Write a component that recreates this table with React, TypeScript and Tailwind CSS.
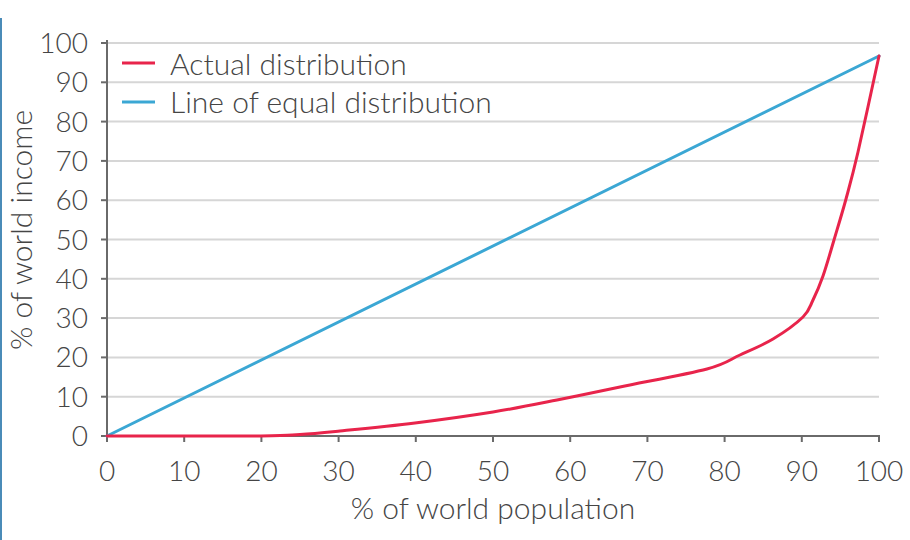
const X0 = 107;
const Y0 = 436;
const XS = 7.72; // px per % of population
const YS = 3.93; // px per % of income

const px = (v: number) => X0 + v * XS;
const py = (v: number) => Y0 - v * YS;

const ticks = [0, 10, 20, 30, 40, 50, 60, 70, 80, 90, 100];

// hand traced points of the actual distribution curve (page coords)
const actual: [number, number][] = [
  [107, 436],
  [261, 436],
  [300, 434.5],
  [340, 431],
  [415, 423],
  [493, 412],
  [557, 400],
  [620, 387],
  [707, 369],
  [740, 355],
  [773, 339],
  [803, 317],
  [813, 300],
  [823, 276],
  [834, 240],
  [846, 199],
  [858, 152],
  [879, 56],
];

function smoothPath(pts: [number, number][]) {
  let d = `M${pts[0][0]},${pts[0][1]}`;
  for (let i = 0; i < pts.length - 1; i++) {
    const p0 = pts[i - 1] ?? pts[i];
    const p1 = pts[i];
    const p2 = pts[i + 1];
    const p3 = pts[i + 2] ?? p2;
    const c1x = p1[0] + (p2[0] - p0[0]) / 6;
    const c1y = p1[1] + (p2[1] - p0[1]) / 6;
    const c2x = p2[0] - (p3[0] - p1[0]) / 6;
    const c2y = p2[1] - (p3[1] - p1[1]) / 6;
    d += ` C${c1x.toFixed(1)},${c1y.toFixed(1)} ${c2x.toFixed(1)},${c2y.toFixed(1)} ${p2[0]},${p2[1]}`;
  }
  return d;
}

const actualPath = smoothPath(actual);

function Chart() {
  return (
    <svg width={872} height={490} viewBox="38 0 872 490" className="block shrink-0">
      {/* grid */}
      {ticks.slice(1).map((t) => (
        <line key={t} x1={X0} x2={px(100)} y1={py(t)} y2={py(t)} stroke="#d6d6d6" strokeWidth={2} />
      ))}

      {/* axes */}
      <line x1={X0} x2={X0} y1={40} y2={Y0 + 1} stroke="#6a6a6a" strokeWidth={2} />
      <line x1={X0 - 1} x2={px(100) + 1} y1={Y0} y2={Y0} stroke="#6a6a6a" strokeWidth={2} />
      {ticks.map((t) => (
        <g key={t}>
          <line x1={X0 - 6} x2={X0} y1={py(t)} y2={py(t)} stroke="#6a6a6a" strokeWidth={2} />
          <line x1={px(t)} x2={px(t)} y1={Y0} y2={Y0 + 6} stroke="#6a6a6a" strokeWidth={2} />
        </g>
      ))}

      {/* tick labels */}
      <g fill="#454545" fontFamily="Lato, sans-serif" fontWeight={300} fontSize={28}>
        {ticks.map((t) => (
          <text key={`y${t}`} x={88} y={py(t) + 10} textAnchor="end">
            {t}
          </text>
        ))}
        {ticks.map((t) => (
          <text key={`x${t}`} x={px(t)} y={481} textAnchor="middle">
            {t}
          </text>
        ))}
      </g>

      {/* lines */}
      <line x1={X0} y1={Y0} x2={879} y2={56} stroke="#3ba7d4" strokeWidth={3} strokeLinecap="round" />
      <path d={actualPath} fill="none" stroke="#e8244b" strokeWidth={3} strokeLinecap="round" />

      {/* legend */}
      <line x1={122} x2={155} y1={63} y2={63} stroke="#e8244b" strokeWidth={3} />
      <line x1={122} x2={155} y1={102} y2={102} stroke="#3ba7d4" strokeWidth={3} />
      <g fill="#454545" fontFamily="Lato, sans-serif" fontWeight={300} fontSize={30}>
        <text x={170} y={75}>Actual distribution</text>
        <text x={170} y={113}>Line of equal distribution</text>
      </g>
    </svg>
  );
}

export default function App() {
  return (
    <div className="w-[910px] h-[540px] bg-white flex overflow-hidden text-[#454545] font-['Lato',sans-serif] font-light">
      <div className="w-[2px] mt-[18px] bg-[#4a8bb8] shrink-0" />
      <div className="w-[36px] shrink-0 flex items-center justify-center pb-[80px]">
        <span className="-rotate-90 whitespace-nowrap text-[30px] leading-none">% of world income</span>
      </div>
      <div className="flex-1 flex flex-col">
        <Chart />
        <div className="pl-[38px] text-center text-[30px] leading-[34px]">% of world population</div>
      </div>
    </div>
  );
}
